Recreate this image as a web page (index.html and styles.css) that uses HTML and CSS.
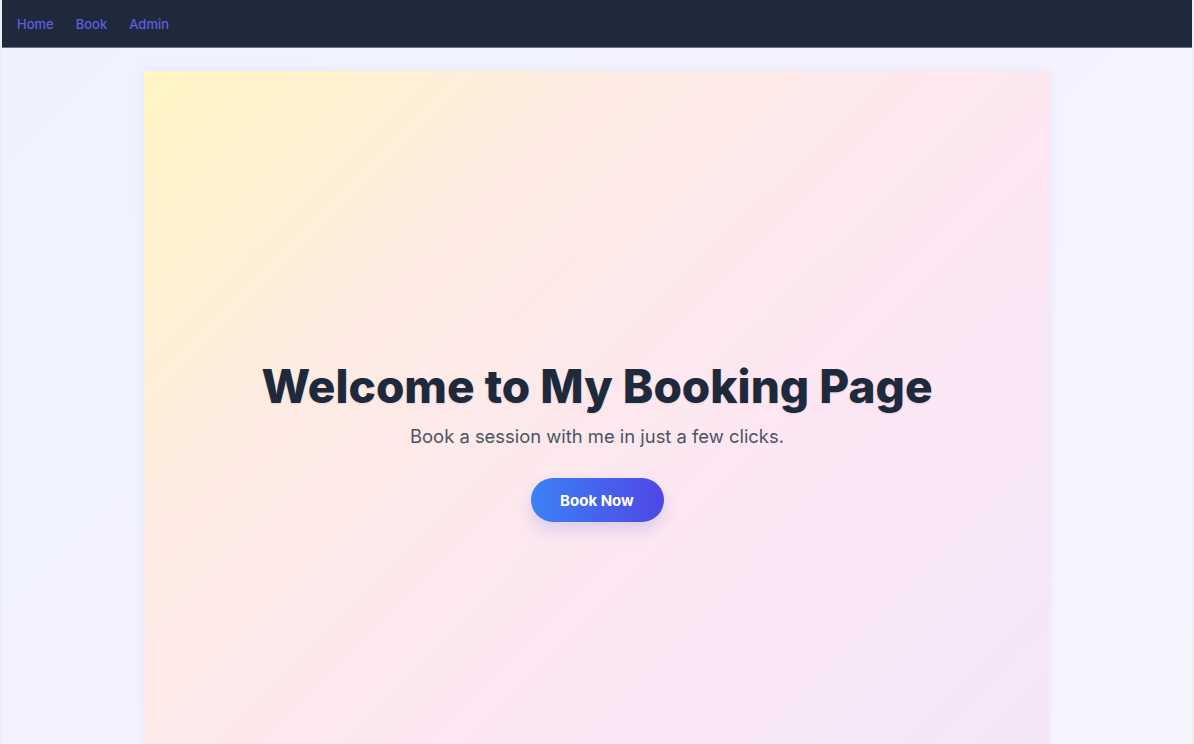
FILE: index.html
```html
<!DOCTYPE html>
<html lang="en">
<head>
<meta charset="utf-8">
<title>My Booking Page</title>
<link rel="stylesheet" href="styles.css">
</head>
<body>
<div class="frame">
  <nav class="nav">
    <a href="#" class="nav-link">Home</a>
    <a href="#" class="nav-link">Book</a>
    <a href="#" class="nav-link">Admin</a>
  </nav>
  <main class="main">
    <section class="hero">
      <h1 class="hero-title">Welcome to My Booking Page</h1>
      <p class="hero-sub">Book a session with me in just a few clicks.</p>
      <a href="#" class="hero-btn">Book Now</a>
    </section>
  </main>
</div>
</body>
</html>
```
FILE: styles.css
```css
* { box-sizing: border-box; }
html, body { margin: 0; padding: 0; height: 100%; }
body {
  background: #eceef2;
  font-family: Inter, "Noto Sans", sans-serif;
  overflow: hidden;
}
.frame {
  margin: 0 2px;
  height: 100%;
  overflow: hidden;
  background: linear-gradient(135deg, #eef2ff 0%, #f5f3ff 60%, #f8f5ff 100%);
  display: flex;
  flex-direction: column;
}
.nav {
  height: 48px;
  flex: none;
  background: #1e293b;
  display: flex;
  align-items: center;
  gap: 22px;
  padding: 0 15px;
  border-bottom: 1px solid #64748b;
}
.nav-link {
  color: #5b5fe0;
  text-decoration: none;
  font-size: 13px;
  font-weight: 500;
}
.main {
  flex: 1;
  min-height: 0;
  display: flex;
  justify-content: center;
  align-items: flex-start;
  padding-top: 23px;
}
.hero {
  width: 906px;
  height: 740px;
  flex: none;
  background: linear-gradient(135deg, #fef7c3 0%, #fdebe4 30%, #fce7f3 60%, #f3e6fa 100%);
  box-shadow: 0 0 8px rgba(200, 190, 220, 0.25);
  display: flex;
  flex-direction: column;
  align-items: center;
  justify-content: center;
  text-align: center;
}
.hero-title {
  margin: 0;
  font-size: 46px;
  font-weight: 800;
  color: #1e293b;
  letter-spacing: 0;
  line-height: 1.15;
  text-shadow: 0 1px 2px rgba(30, 41, 59, 0.12);
}
.hero-sub {
  margin: 10px 0 0;
  font-size: 18.4px;
  color: #4b5563;
  line-height: 1.5;
}
.hero-btn {
  margin-top: 28px;
  height: 44px;
  width: 133px;
  border-radius: 22px;
  display: flex;
  align-items: center;
  justify-content: center;
  color: #fff;
  font-weight: 700;
  font-size: 15px;
  text-decoration: none;
  background: linear-gradient(90deg, #3b82f6, #4f46e5);
  box-shadow: 0 8px 16px rgba(79, 70, 229, 0.18);
}
```
